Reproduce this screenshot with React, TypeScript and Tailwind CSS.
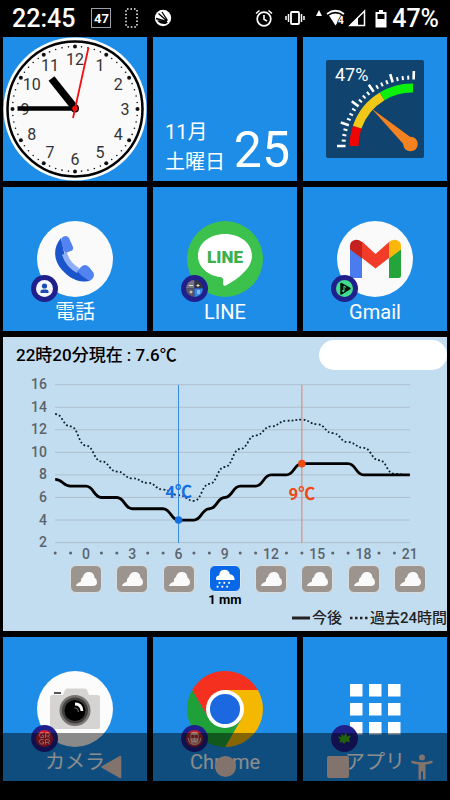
import type { ReactNode } from "react";

/* ---------- Weather data ---------- */

const FIRST_HOUR = -2;
const LAST_HOUR = 21;

const forecast = [7.6, 7, 7, 6, 6, 5, 5, 5, 4, 4, 5, 6, 7, 7, 8, 8, 9, 9, 9, 9, 8, 8, 8, 8];
const past = [
  13.4, 12.3, 10.6, 9.2, 8.3, 7.7, 7.3, 6.7, 6.2, 5.7, 7.2, 8.7, 10.3, 11.5, 12.3, 12.8, 12.9,
  12.5, 11.7, 10.9, 10.4, 9.3, 8.1, 8,
];

const weather = [
  { hour: 0, rain: "" },
  { hour: 3, rain: "" },
  { hour: 6, rain: "" },
  { hour: 9, rain: "1 mm" },
  { hour: 12, rain: "" },
  { hour: 15, rain: "" },
  { hour: 18, rain: "" },
  { hour: 21, rain: "" },
];

const xOf = (hour: number) => 83 + hour * 15.42;
const yOf = (temp: number) => 169.6 - (temp - 2) * 11.28;

// Eased steps: every hour is joined with horizontal tangents
function linePath(values: number[]) {
  return values
    .map((v, i) => {
      const x = xOf(FIRST_HOUR + i);
      const y = yOf(v);
      if (i === 0) return `M${x} ${y}`;
      const mid = x - 7.71;
      return `C${mid} ${yOf(values[i - 1])} ${mid} ${y} ${x} ${y}`;
    })
    .join(" ");
}

/* ---------- Status bar ---------- */

function StatusBar() {
  return (
    <header className="flex h-[37px] items-center pl-3 pr-[11px] pb-px text-white">
      <span className="text-[25px] leading-none font-medium">22:45</span>
      <span className="ml-4 flex size-5 items-center justify-center border border-gray-400 text-[13px] leading-none font-bold">
        47
      </span>
      <svg className="ml-[14px] h-5 w-[13px]" viewBox="0 0 13 20" fill="none" stroke="#fff">
        <rect x="1" y="1" width="11" height="18" rx="1" strokeWidth="1.5" strokeDasharray="1.5 2" />
      </svg>
      <svg className="ml-4 size-[18px]" viewBox="0 0 18 18">
        <circle cx="9" cy="9" r="8.2" fill="#fff" />
        <path d="M4.5 4.5l8.5 7.5M8 3l5.5 8.5M2 9.5l11 3" stroke="#000" strokeWidth="1.3" />
        <path d="M3 11.5q6-1 11 2l-2.500 1.500q-5 .5-8.500-3.500z" fill="#000" />
      </svg>

      <div className="ml-auto flex items-center">
        <svg className="size-[18px]" viewBox="0 0 18 18" fill="none" stroke="#fff">
          <circle cx="9" cy="10" r="6.800" strokeWidth="1.700" />
          <path d="M9 6v4.300l3 1.800M1 4.500l3.500-3M17 4.500l-3.500-3" strokeWidth="1.600" />
        </svg>
        <svg className="ml-3 h-4 w-5" viewBox="0 0 20 16" fill="none" stroke="#fff">
          <rect x="6" y="2" width="8" height="12" rx="1" strokeWidth="1.800" />
          <path d="M3.500 4v8M1 6v4M16.500 4v8M19 6v4" strokeWidth="1.500" />
        </svg>
        <svg className="ml-[11px] h-[18px] w-[6px]" viewBox="0 0 6 18">
          <path d="M3 1l3 6H0z" fill="#fff" />
        </svg>
        <svg className="ml-1 h-[18px] w-5" viewBox="0 0 20 18">
          <path d="M1 5Q9.500-1.500 18 5" fill="none" stroke="#fff" strokeWidth="1.800" />
          <path d="M3 6.500q6.500-4 13 0L9.500 16.500z" fill="#fff" />
          <text
            x="12"
            y="15"
            fontSize="10"
            fontWeight="700"
            fill="#fff"
            stroke="#000"
            strokeWidth="1.500"
            paintOrder="stroke"
          >
            4
          </text>
        </svg>
        <svg className="ml-[2px] size-[18px]" viewBox="0 0 18 18">
          <path d="M2 16.500L16.500 2v14.500z" fill="none" stroke="#fff" strokeWidth="1.500" />
          <path d="M1 17l9-9v9z" fill="#fff" />
        </svg>
        <svg className="ml-[9px] h-[19px] w-3" viewBox="0 0 12 19">
          <path d="M4 1h4v2h3.500v15.500H.5V3H4z" fill="#fff" />
          <path d="M2.500 5h7v5h-7z" fill="#000" />
        </svg>
        <span className="ml-[5px] text-[25px] leading-none font-medium">47%</span>
      </div>
    </header>
  );
}

/* ---------- Widgets on the first row ---------- */

function Clock() {
  const numbers = [1, 2, 3, 4, 5, 6, 7, 8, 9, 10, 11, 12];
  const minutes = Array.from({ length: 60 }, (_, i) => i);
  return (
    <div className="aspect-square bg-[#1e8de8]">
      <svg className="block w-full" viewBox="0 0 144 144">
        <circle cx="72" cy="72" r="71.500" fill="#fff" />
        <circle cx="72" cy="72" r="67.500" fill="#fafafa" stroke="#000" strokeWidth="2.500" />
        {minutes.map((m) => {
          const a = (m * Math.PI) / 30;
          return (
            <circle
              key={m}
              cx={72 + 62.5 * Math.sin(a)}
              cy={72 - 62.5 * Math.cos(a)}
              r={m % 5 === 0 ? 2 : 0.8}
              fill="#111"
            />
          );
        })}
        {numbers.map((n) => {
          const a = (n * Math.PI) / 6;
          return (
            <text
              key={n}
              x={72 + 50 * Math.sin(a)}
              y={77.5 - 50 * Math.cos(a)}
              textAnchor="middle"
              fontSize="16"
              fill="#333"
            >
              {n}
            </text>
          );
        })}
        <path d="M72 71L48.500 41.500" stroke="#000" strokeWidth="7.500" />
        <path d="M72 71.500H14.500" stroke="#000" strokeWidth="4.500" />
        <circle cx="72" cy="71.500" r="4" fill="#000" />
        <path d="M70 81L85.500 10.500" stroke="#f01010" strokeWidth="1.800" />
        <circle cx="72" cy="71.500" r="2.800" fill="#f01010" />
      </svg>
    </div>
  );
}

function DateTile() {
  return (
    <div className="flex aspect-square items-end justify-between bg-[#1e8de8] pr-[7px] pb-1 pl-3 text-white">
      <div className="text-xl leading-[30px]">
        <p>11月</p>
        <p>土曜日</p>
      </div>
      <p className="pb-1 text-[50px] leading-[46px]">25</p>
    </div>
  );
}

function BatteryGauge() {
  const ticks = Array.from({ length: 21 }, (_, i) => i);
  const arc = (from: number, to: number) => {
    const p = (deg: number) => {
      const a = (deg * Math.PI) / 180;
      return `${86 - 58 * Math.cos(a)} ${86 - 58 * Math.sin(a)}`;
    };
    return `M${p(from)} A58 58 0 0 1 ${p(to)}`;
  };
  return (
    <div className="flex aspect-square items-center justify-center bg-[#1e8de8]">
      <svg className="size-[98px] rounded-[2px] bg-[#10446f]" viewBox="0 0 98 98">
        <g fill="none" strokeWidth="9">
          <path d={arc(0, 19)} stroke="#f00505" />
          <path d={arc(19, 59)} stroke="#f0c818" />
          <path d={arc(59, 91)} stroke="#0cf00c" />
        </g>
        {ticks.map((t) => {
          const a = (t * 4.57 * Math.PI) / 180;
          const end = t % 4 === 0 ? 75 : 70.5;
          return (
            <line
              key={t}
              x1={86 - 66.5 * Math.cos(a)}
              y1={86 - 66.5 * Math.sin(a)}
              x2={86 - end * Math.cos(a)}
              y2={86 - end * Math.sin(a)}
              stroke="#fff"
              strokeWidth={t % 4 === 0 ? 2.6 : 2}
            />
          );
        })}
        <path d="M45.500 48.500L87 79L80 87z" fill="#f58220" />
        <circle cx="84.500" cy="84" r="7.300" fill="#f58220" />
        <text x="9" y="21" fontSize="18" fill="#fff">
          47%
        </text>
      </svg>
    </div>
  );
}

/* ---------- App tiles ---------- */

type AppTileProps = { label: string; icon: ReactNode; badge: ReactNode };

function AppTile({ label, icon, badge }: AppTileProps) {
  return (
    <button
      type="button"
      className="flex aspect-square flex-col items-center justify-end bg-[#1e8de8] pb-1 text-white"
    >
      <span className="relative block size-[76px]">
        <svg className="size-full" viewBox="0 0 76 76">
          {icon}
        </svg>
        <svg className="absolute top-[54px] -left-[6px] size-[27px]" viewBox="0 0 27 27">
          <circle cx="13.500" cy="13.500" r="13.500" fill="#20208c" />
          {badge}
        </svg>
      </span>
      <span className="text-xl leading-[30px]">{label}</span>
    </button>
  );
}

const phoneIcon = (
  <>
    <circle cx="38" cy="38" r="38" fill="#fafafa" />
    <path
      d="M24 17C16 26 16 39 25 49C34 59 45 63 54 59L40 49Q31 42 27 31z"
      fill="#1a55cc"
    />
    <path d="M25 34L30 31Q32 41 42 47L40 52Q29 46 25 34z" fill="#8fb0f8" />
    <path d="M24.500 17Q29 13 32 17L36 26Q36.500 29 34 30L28 32Q24 24 24.500 17z" fill="#5283f0" />
    <path d="M40 50L44 46Q48 42 52 46L56 51Q58 54 56 57Q54 60 51 59Q45 56 40 50z" fill="#5283f0" />
  </>
);

const lineIcon = (
  <>
    <circle cx="38" cy="38" r="38" fill="#3cc24c" />
    <path
      d="M38 13C22.500 13 11 22.500 11 35C11 46 21 54.500 33 56Q37 56.500 36 61Q35.500 66 39 64.500C47 60 65 49 65 35C65 22.500 53.500 13 38 13z"
      fill="#fff"
    />
    <text x="38" y="41.500" textAnchor="middle" fontSize="17" fontWeight="900" fill="#3cb04c">
      LINE
    </text>
  </>
);

const gmailIcon = (
  <>
    <circle cx="38" cy="38" r="38" fill="#fafafa" />
    <path d="M13 28L25 37V57H15.500Q13 57 13 54.500z" fill="#4a7cf0" />
    <path d="M64 28L52 37V57H61.500Q64 57 64 54.500z" fill="#23a53c" />
    <path d="M25 20.500L38.500 33L52 21V37L38.500 47.500L25 37z" fill="#f03c28" />
    <path d="M25 21Q22 18.500 19 18.700Q13 19.500 13 25V28.500L25 37.500z" fill="#c5221f" />
    <path d="M52 21Q55 18.500 58 18.700Q64 19.500 64 25V28.500L52 37.500z" fill="#fbb80a" />
  </>
);

const cameraIcon = (
  <>
    <circle cx="38" cy="38" r="38" fill="#fcfcfc" />
    <path d="M17 22h7" stroke="#555" strokeWidth="2" />
    <path
      d="M15 24H26L28 19Q28.500 17.500 30 17.500H48Q49.500 17.500 50 19L52 24H60.500Q63 24 63 26.500V55.500Q63 58 60.500 58H15.500Q13 58 13 55.500V26Q13 24 15 24z"
      fill="#d6d4d2"
    />
    <circle cx="38" cy="39.500" r="15.500" fill="#777472" />
    <circle cx="38" cy="39.500" r="13" fill="#403e3d" />
    <circle cx="38" cy="39.500" r="10.500" fill="#000" />
    <path d="M38 33Q44.500 33 45 40" fill="none" stroke="#fff" strokeWidth="2.800" />
    <path d="M37.500 37Q41 37 41.500 41" fill="none" stroke="#666" strokeWidth="1.200" />
  </>
);

const chromeIcon = (
  <g transform="scale(1.5833)">
    <path d="M24 12H44.780A24 24 0 0 0 3.220 12L13.610 30L24 24z" fill="#f5301f" />
    <path d="M44.780 12A24 24 0 0 1 24 48L34.390 30L24 24V12z" fill="#f5b800" />
    <path d="M3.220 12A24 24 0 0 0 24 48L34.390 30L24 24L13.610 30z" fill="#20a038" />
    <circle cx="24" cy="24" r="12" fill="#fff" />
    <circle cx="24" cy="24" r="9.500" fill="#1c68e0" />
  </g>
);

const drawerIcon = (
  <>
    {[13, 32, 51].map((y) =>
      [13, 32, 51].map((x) => (
        <rect key={`${x}-${y}`} x={x} y={y} width="12.500" height="12.500" fill="#fff" />
      ))
    )}
  </>
);

const contactBadge = (
  <>
    <circle cx="13.500" cy="13.500" r="8.500" fill="#f5f8ff" />
    <circle cx="13.500" cy="11" r="2.600" fill="#1c4cb4" />
    <path d="M9.500 18V16Q9.500 14.500 12 14.500H15Q17.500 14.500 17.500 16V18z" fill="#1c4cb4" />
  </>
);

const calculatorBadge = (
  <>
    <path d="M13.500 5A8.500 8.500 0 0 0 5 13.500H13.500z" fill="#777482" />
    <path d="M13.500 5A8.500 8.500 0 0 1 22 13.500H13.500z" fill="#33343e" />
    <path d="M5 13.500A8.500 8.500 0 0 0 13.500 22V13.500z" fill="#565560" />
    <path d="M22 13.500A8.500 8.500 0 0 1 13.500 22V13.500z" fill="#3288e8" />
    <path
      d="M8 10.500h4M15.500 10.500h3M17 9v3M8.500 17h3M10 15.500v3M16 16h3M16 18h3"
      stroke="#e8e0e0"
      strokeWidth="1"
    />
  </>
);

const playBadge = (
  <>
    <circle cx="13.500" cy="13.500" r="8.500" fill="#42dc90" />
    <path d="M10 8.500L19 13.500L10 19z" fill="#06140c" stroke="#06140c" strokeWidth="1.500" strokeLinejoin="round" />
    <path d="M13 16V11l2 1.500" stroke="#42dc90" fill="none" />
    <circle cx="12.200" cy="16" r="1.100" fill="#42dc90" />
  </>
);

const qrBadge = (
  <>
    <circle cx="13.500" cy="13.500" r="8.500" fill="#cc1c2c" />
    <g fill="none" stroke="#f0b8b0" strokeWidth="1">
      <path d="M12.500 8H10Q8.500 8 8.500 10T10 12.500H12.500V10.500H11M14.500 13V8H17Q18.500 8 18.500 9.500T17 11H15M17 11l1.500 2" />
      <path d="M12.500 14.500H10Q8.500 14.500 8.500 16.500T10 19H12.500V17H11M14.500 19.500V14.500H17Q18.500 14.500 18.500 16T17 17.500H15M17 17.500l1.500 2" />
    </g>
  </>
);

const trainBadge = (
  <>
    <circle cx="13.500" cy="13.500" r="8.500" fill="#b42828" />
    <rect x="9.500" y="7.500" width="8" height="10" rx="2" fill="#ecd0c0" />
    <path d="M10.500 10h2.500v3h-2.500zM14 10h2.500v3H14zM11 15h1.500M14.500 15H16" fill="#b42828" stroke="#b42828" strokeWidth=".6" />
    <path d="M7.500 13Q7.500 19.500 13.500 19.500T19.500 13M10 18h7" fill="none" stroke="#ecd0c0" />
  </>
);

const leafBadge = (
  <path
    d="M13 19L11.500 17L8 17.500L9.500 15L7 11.500L10.500 12L10.500 8.500L13 11L15 7.500L16 11.500L20 10.500L18 14L19 17L15 16.500z"
    fill="#3cb414"
  />
);

/* ---------- Weather panel ---------- */

function TemperatureChart() {
  const hours = Array.from({ length: LAST_HOUR - FIRST_HOUR + 1 }, (_, i) => FIRST_HOUR + i);
  return (
    <svg className="block w-full" viewBox="0 0 444 190" fontSize="14" fontWeight="500">
      {[16, 14, 12, 10, 8, 6, 4, 2].map((t) => (
        <g key={t}>
          <line x1="52" x2="407" y1={yOf(t)} y2={yOf(t)} stroke="#aebfcd" />
          <text x="44" y={yOf(t) + 4.5} textAnchor="end" fill="#5a646c">
            {t}
          </text>
        </g>
      ))}
      {hours.map((h) =>
        h >= 0 && h % 3 === 0 ? (
          <text key={h} x={xOf(h)} y="186" textAnchor="middle" fill="#5a646c">
            {h}
          </text>
        ) : (
          <circle key={h} cx={xOf(h)} cy="180" r="1.500" fill="#5a646c" />
        )
      )}
      <path d={linePath(past)} fill="none" stroke="#10202c" strokeWidth="1.800" strokeDasharray="1.800 2.200" />
      <path d={linePath(forecast)} fill="none" stroke="#000" strokeWidth="2.800" />
      <line x1={xOf(6)} x2={xOf(6)} y1="12" y2="170" stroke="#3a8ce0" />
      <line x1={xOf(14)} x2={xOf(14)} y1="12" y2="170" stroke="#dc806c" />
      <circle cx={xOf(6)} cy={yOf(4)} r="3.800" fill="#1470e0" />
      <circle cx={xOf(14)} cy={yOf(9)} r="3.800" fill="#f04a14" />
      <g fontSize="17" fontWeight="700" textAnchor="middle">
        <text x={xOf(6)} y="125" fill="#1470e0">
          4℃
        </text>
        <text x={xOf(14)} y="127" fill="#f04a14">
          9℃
        </text>
      </g>
    </svg>
  );
}

function WeatherIcon({ rainy }: { rainy: boolean }) {
  return rainy ? (
    <svg className="h-7 w-8 rounded-md border border-[#d8e6f2] bg-[#0868e8]" viewBox="0 0 30 26">
      <path d="M6 14.500Q4.500 10.500 9 9.500Q9.500 4 14.500 4Q19 4 20 8.500Q25 9 25 14.500z" fill="#fff" />
      <path
        d="M9.500 16.500l-.5 2M14.500 16.500l-.5 2M19.500 16.500l-.5 2M7.500 20.500l-.5 2M12.500 20.500l-.5 2M17.500 20.500l-.5 2"
        stroke="#fff"
        strokeWidth="1.800"
      />
    </svg>
  ) : (
    <svg className="h-7 w-8 rounded-md border border-[#dadddd] bg-[#9c948e]" viewBox="0 0 30 26">
      <path
        d="M5 19.500Q5.500 17.500 10 15.500Q9.500 12 12 11Q13 6 18 6Q23 6 23.500 11.500Q26 13 26 16Q26 20 22 20H6.500Q4.500 20 5 19.500z"
        fill="#fafafa"
      />
    </svg>
  );
}

function WeatherPanel() {
  return (
    <section className="col-span-3 bg-[#c3ddf0] pb-[3px]">
      <div className="flex h-9 items-start justify-between pt-[3px] pl-[13px]">
        <h2 className="pt-[3px] text-[17px] leading-6 font-medium text-black">
          22時20分現在 : 7.6℃
        </h2>
        <div className="h-[30px] w-32 rounded-full bg-white" />
      </div>
      <TemperatureChart />
      <ul className="flex justify-between pt-[2px] pr-[21px] pl-[67px]">
        {weather.map((w) => (
          <li key={w.hour} className="flex h-[43px] w-8 flex-col items-center">
            <WeatherIcon rainy={w.rain !== ""} />
            <span className="text-[13px] leading-4 font-bold whitespace-nowrap text-black">
              {w.rain}
            </span>
          </li>
        ))}
      </ul>
      <div className="flex items-center justify-end text-[15px] leading-5 font-medium text-[#222]">
        <svg className="mr-[2px] h-1 w-[18px]" viewBox="0 0 18 4">
          <path d="M0 2h18" stroke="#222" strokeWidth="3" />
        </svg>
        <span>今後</span>
        <svg className="mr-[2px] ml-2 h-1 w-[18px]" viewBox="0 0 18 4">
          <path d="M0 2h18" stroke="#222" strokeWidth="2.500" strokeDasharray="2.500 2.500" />
        </svg>
        <span>過去24時間</span>
      </div>
    </section>
  );
}

/* ---------- Navigation bar, drawn over the last row ---------- */

function NavBar() {
  return (
    <nav className="absolute inset-x-0 bottom-0 flex h-[67px] bg-black/45">
      <div className="w-14" />
      <button type="button" aria-label="Back" className="flex flex-1 items-center justify-center">
        <svg className="size-6" viewBox="0 0 24 24">
          <path d="M2 12L20.500 1.500V22.500z" fill="#82746c" stroke="#82746c" strokeWidth="1.500" strokeLinejoin="round" />
        </svg>
      </button>
      <button type="button" aria-label="Home" className="flex flex-1 items-center justify-center">
        <span className="size-[21px] rounded-full bg-[#82746c]" />
      </button>
      <button type="button" aria-label="Recent apps" className="flex flex-1 items-center justify-center">
        <span className="size-[22px] rounded-[2px] bg-[#82746c]" />
      </button>
      <button type="button" aria-label="Accessibility" className="flex w-14 items-center justify-center">
        <svg className="h-[26px] w-[22px]" viewBox="0 0 22 26">
          <circle cx="11" cy="3.500" r="3" fill="#82746c" />
          <path d="M.5 6.500Q11 10 21.500 6.500V9Q18 10 14.500 10.500V25.500H12V17.500H10V25.500H7.500V10.500Q4 10 .5 9z" fill="#82746c" />
        </svg>
      </button>
    </nav>
  );
}

export default function App() {
  return (
    <div className="relative min-h-screen bg-black font-[Roboto,'Noto_Sans_CJK_JP',sans-serif]">
      <StatusBar />
      <main className="grid grid-cols-3 gap-[6px] px-[3px] pb-[19px]">
        <Clock />
        <DateTile />
        <BatteryGauge />

        <AppTile label="電話" icon={phoneIcon} badge={contactBadge} />
        <AppTile label="LINE" icon={lineIcon} badge={calculatorBadge} />
        <AppTile label="Gmail" icon={gmailIcon} badge={playBadge} />

        <WeatherPanel />

        <AppTile label="カメラ" icon={cameraIcon} badge={qrBadge} />
        <AppTile label="Chrome" icon={chromeIcon} badge={trainBadge} />
        <AppTile label="アプリ" icon={drawerIcon} badge={leafBadge} />
      </main>
      <NavBar />
    </div>
  );
}
